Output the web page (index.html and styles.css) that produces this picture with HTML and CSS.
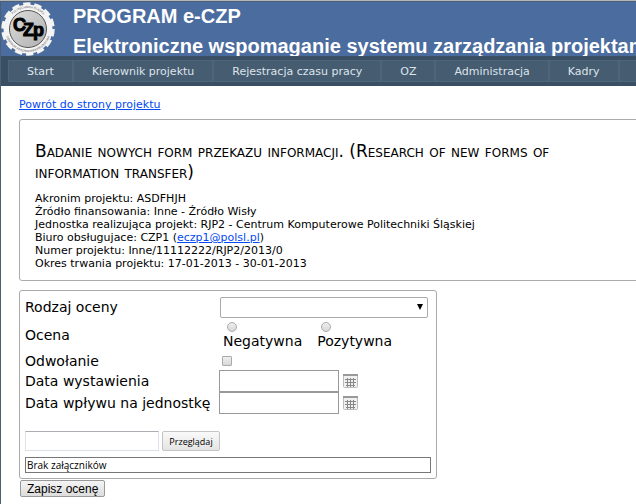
FILE: index.html
```html
<!DOCTYPE html>
<html lang="pl">
<head>
  <meta charset="UTF-8">
  <title>PROGRAM e-CZP</title>
  <link rel="stylesheet" href="styles.css">
</head>
<body>
  <div class="page">
    <header class="header">
      <svg class="logo" viewBox="0 0 54 54" width="54" height="54" role="img" aria-label="CZP">
        <defs>
          <linearGradient id="disk" x1="0" y1="0" x2="1" y2="1">
            <stop offset="0" stop-color="#dcdcdc"/>
            <stop offset="1" stop-color="#b0b0b0"/>
          </linearGradient>
          <path id="arc-top" d="M6 27 A21 21 0 1 1 48 27"/>
          <path id="arc-bottom" d="M4 27 A23 23 0 0 0 50 27"/>
        </defs>
        <circle cx="27" cy="27" r="24.5" fill="#f4f4f4"/>
        <circle cx="27" cy="27" r="25" fill="none" stroke="#f4f4f4" stroke-width="3.4" stroke-dasharray="7.4 3.82"/>
        <circle cx="27" cy="27" r="18.5" fill="url(#disk)" stroke="#555" stroke-width="1"/>
        <text class="logo-ring"><textPath href="#arc-top" startOffset="50%" text-anchor="middle">POLITECHNIKA ŚLĄSKA</textPath></text>
        <text class="logo-ring"><textPath href="#arc-bottom" startOffset="50%" text-anchor="middle">CENTRUM ZARZĄDZANIA PROJEKTAMI</textPath></text>
        <text class="logo-name" x="12 22 32" y="29 34 34">CZp</text>
      </svg>
      <div class="titles">
        <h1>PROGRAM e-CZP</h1>
        <h1>Elektroniczne wspomaganie systemu zarządzania projektami</h1>
      </div>
    </header>

    <nav class="menu">
      <a href="#">Start</a>
      <a href="#">Kierownik projektu</a>
      <a href="#">Rejestracja czasu pracy</a>
      <a href="#">OZ</a>
      <a href="#">Administracja</a>
      <a href="#">Kadry</a>
      <a href="#">I</a>
    </nav>

    <main class="main">
      <a class="back" href="#">Powrót do strony projektu</a>

      <section class="box project">
        <h2>Badanie nowych form przekazu informacji. (Research of new forms of information transfer)</h2>
        <div>Akronim projektu: ASDFHJH</div>
        <div>Źródło finansowania: Inne - Źródło Wisły</div>
        <div>Jednostka realizująca projekt: RJP2 - Centrum Komputerowe Politechniki Śląskiej</div>
        <div>Biuro obsługujace: CZP1 (<a href="mailto:eczp1@polsl.pl">eczp1@polsl.pl</a>)</div>
        <div>Numer projektu: Inne/11112222/RJP2/2013/0</div>
        <div>Okres trwania projektu: 17-01-2013 - 30-01-2013</div>
      </section>

      <form class="rating">
        <div class="box fields">
          <div class="row">
            <label for="kind">Rodzaj oceny</label>
            <div class="select">
              <select id="kind"><option></option></select>
            </div>
          </div>
          <div class="row row-radio">
            <span id="grade">Ocena</span>
            <div class="radios" role="radiogroup" aria-labelledby="grade">
              <label><input type="radio" name="grade">Negatywna</label>
              <label><input type="radio" name="grade">Pozytywna</label>
            </div>
          </div>
          <div class="row row-check">
            <label for="appeal">Odwołanie</label>
            <input type="checkbox" id="appeal">
          </div>
          <div class="row">
            <label for="issued">Data wystawienia</label>
            <div class="date">
              <input type="text" id="issued">
              <button type="button" class="calendar" aria-label="Kalendarz">
                <svg viewBox="0 0 15 14" width="15" height="14">
                  <rect x="0.5" y="0.5" width="14" height="13" rx="1" fill="#f0f0f0" stroke="#bbb"/>
                  <path d="M0 1h15" stroke="#999" stroke-width="2"/>
                  <path d="M2 5.5h11M2 8.5h11M3 11.5h9M4.5 4v9M7.5 4v9M10.5 4v9" stroke="#888" fill="none"/>
                </svg>
              </button>
            </div>
          </div>
          <div class="row">
            <label for="received">Data wpływu na jednostkę</label>
            <div class="date">
              <input type="text" id="received">
              <button type="button" class="calendar" aria-label="Kalendarz">
                <svg viewBox="0 0 15 14" width="15" height="14">
                  <rect x="0.5" y="0.5" width="14" height="13" rx="1" fill="#f0f0f0" stroke="#bbb"/>
                  <path d="M0 1h15" stroke="#999" stroke-width="2"/>
                  <path d="M2 5.5h11M2 8.5h11M3 11.5h9M4.5 4v9M7.5 4v9M10.5 4v9" stroke="#888" fill="none"/>
                </svg>
              </button>
            </div>
          </div>
          <div class="upload">
            <input type="text" aria-label="Plik">
            <button type="button">Przeglądaj</button>
          </div>
          <div class="attachments">Brak załączników</div>
        </div>
        <button type="submit" class="save">Zapisz ocenę</button>
      </form>
    </main>
  </div>
</body>
</html>
```

FILE: styles.css
```css
* {
  box-sizing: border-box;
}

body {
  margin: 0;
  background: #b6b6b6;
  font-family: Verdana, "DejaVu Sans", sans-serif;
  font-size: 11px;
  color: #000;
  overflow: hidden;
}

.page {
  margin-top: 1px;
  min-height: 100vh;
  background: #fff;
  border: 1px solid #496077;
  border-right: none;
}

.header {
  display: flex;
  height: 54px;
  background: #4b6c9e;
  overflow: hidden;
}

.logo {
  flex: none;
}

.logo-ring {
  font: 3px "Liberation Sans", sans-serif;
  fill: #555;
}

.logo-name {
  font: bold 18px "Liberation Sans", Arial, sans-serif;
  fill: #000;
  stroke: #000;
  stroke-width: 1;
}

.titles {
  padding-left: 18px;
}

h1 {
  margin: 0;
  font: bold 20px/32px "Liberation Sans", Arial, sans-serif;
  color: #fff;
  white-space: nowrap;
}

h1:first-child {
  line-height: 28px;
}

.menu {
  display: flex;
  padding: 4px 0 4px 7px;
  background: #3a4f63;
  overflow: hidden;
}

.menu a {
  flex: none;
  padding: 4px 18px 2px;
  border: 1px solid #4e667d;
  background: #465c71;
  color: #dde4ec;
  line-height: 14px;
  text-decoration: none;
}

.main {
  padding: 12px 0 0 18px;
}

.main a {
  color: #034af3;
}

.back {
  display: block;
  line-height: 13px;
}

.box {
  border: 1px solid #aaa;
  border-radius: 3px;
}

.project {
  margin: 8px -8px 9px 0;
  padding: 21px 24px 10px 15px;
  line-height: 13px;
}

h2 {
  margin: 0 0 9px;
  font-size: 17px;
  font-weight: normal;
  font-variant: small-caps;
  line-height: 21px;
}

.rating {
  max-width: 418px;
}

.fields {
  padding: 5px;
  font-size: 14px;
}

.row {
  display: grid;
  grid-template-columns: 194px 1fr;
  align-items: center;
  height: 22px;
}

.row-radio {
  height: 34px;
}

.row-check {
  height: 18px;
}

.select {
  position: relative;
  padding-left: 1px;
}

.select::after {
  content: "";
  position: absolute;
  right: 8px;
  top: 7px;
  border: 3px solid transparent;
  border-top: 6px solid #000;
  border-bottom: 0;
  pointer-events: none;
}

select {
  display: block;
  width: 208px;
  height: 21px;
  border: 1px solid #aaa;
  border-radius: 2px;
  background: #fff;
  appearance: none;
}

.radios {
  display: flex;
  gap: 15px;
  padding: 2px 0 0 4px;
}

.radios label {
  line-height: 18px;
}

input[type="radio"],
input[type="checkbox"] {
  display: block;
  width: 10px;
  height: 10px;
  margin: 0 4px;
  border: 1px solid #aaa;
  background: linear-gradient(#eee, #d8d8d8);
  appearance: none;
}

input[type="radio"] {
  border-radius: 50%;
}

input[type="checkbox"] {
  margin: 0 3px;
  border-radius: 1px;
}

.date {
  display: flex;
  align-items: center;
  gap: 4px;
}

.date input {
  width: 120px;
  height: 22px;
  border: 1px solid #999;
  background: #fff;
}

.calendar {
  display: flex;
  padding: 0;
  border: none;
  background: none;
}

.upload {
  display: flex;
  gap: 3px;
  margin: 17px 0 6px;
}

.upload input {
  width: 134px;
  height: 20px;
  border: 1px solid #dce0e8;
  border-top-color: #abadb3;
}

.upload button {
  width: 58px;
  height: 20px;
  padding: 0;
  border: 1px solid #c4c4c4;
  border-radius: 2px;
  background: linear-gradient(#fafafa, #e4e4e4);
  font: 9px "Open Sans", sans-serif;
  color: #000;
}

.attachments {
  border: 1px solid #777;
  padding: 0 1px;
  font: 10px/14px "Open Sans", sans-serif;
}

.save {
  display: block;
  height: 17px;
  margin: 1px;
  padding: 0 6px;
  border: 1px solid #999;
  border-radius: 2px;
  background: linear-gradient(#f4f4f4, #ddd);
  font: 12px/14px "Liberation Sans", Arial, sans-serif;
  color: #000;
}
```
